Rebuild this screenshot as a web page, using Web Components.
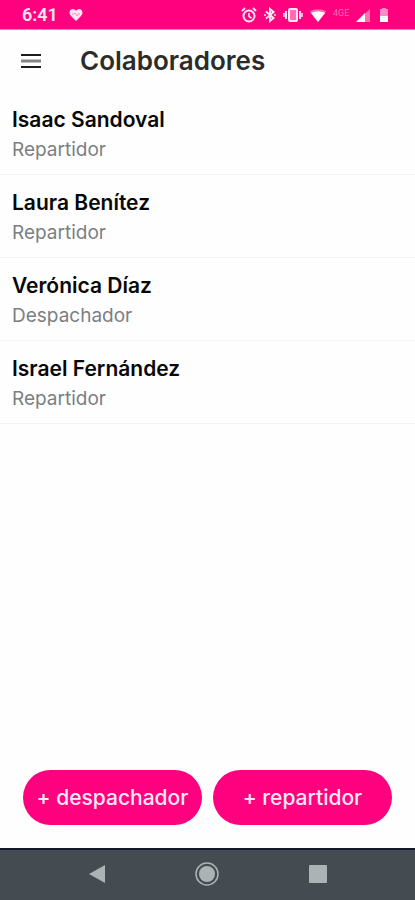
<!DOCTYPE html>
<html lang="es">
<head>
<meta charset="utf-8">
<meta name="viewport" content="width=device-width, initial-scale=1">
<title>Colaboradores</title>
<style>
  body {
    margin: 0;
    background: #fefefe;
    color: #080808;
    font-family: Inter, "Open Sans", sans-serif;
  }
</style>
</head>
<body>
<staff-app>
  <status-bar slot="status" time="6:41"></status-bar>
  <app-header slot="header">Colaboradores</app-header>
  <staff-member>Isaac Sandoval<span slot="role">Repartidor</span></staff-member>
  <staff-member>Laura Benítez<span slot="role">Repartidor</span></staff-member>
  <staff-member>Verónica Díaz<span slot="role">Despachador</span></staff-member>
  <staff-member>Israel Fernández<span slot="role">Repartidor</span></staff-member>
  <pill-button slot="actions">+ despachador</pill-button>
  <pill-button slot="actions">+ repartidor</pill-button>
  <system-nav slot="nav"></system-nav>
</staff-app>

<script>
/**
 * Defines a custom element that renders a template in its shadow root.
 *
 * @param {string} name - The tag name.
 * @param {string} html - The markup and styles of the element.
 * @param {Function} [setup] - Called with the element when it is connected.
 */
function define (name, html, setup) {
  const template = document.createElement('template')
  template.innerHTML = html

  customElements.define(
    name,
    class extends HTMLElement {
      constructor () {
        super()
        this.attachShadow({ mode: 'open' }).append(
          template.content.cloneNode(true)
        )
      }

      connectedCallback () {
        if (setup) {
          setup(this)
        }
      }
    }
  )
}

// Page frame.
define('staff-app', `
<style>
  :host {
    display: flex;
    flex-direction: column;
    min-height: 100vh;
  }

  main {
    flex: 1;
  }

  footer {
    display: grid;
    grid-template-columns: 1fr 1fr;
    gap: 11px;
    padding: 23px;
  }
</style>

<slot name="status"></slot>
<slot name="header"></slot>
<main role="list"><slot></slot></main>
<footer><slot name="actions"></slot></footer>
<slot name="nav"></slot>
`)

// Status bar with the clock and the device icons.
define('status-bar', `
<style>
  :host {
    display: flex;
    align-items: center;
    justify-content: space-between;
    height: 29px;
    padding: 0 23px 0 22px;
    background: #ff007f;
    border-bottom: 1px solid #ff7fbd;
    color: #ffe6f2;
    font-family: Roboto, sans-serif;
  }

  div {
    display: flex;
    align-items: center;
    gap: 11px;
  }

  .icons {
    gap: 5px;
  }

  time {
    font-size: 18px;
    font-weight: 600;
  }

  .net {
    width: 17px;
    font-size: 9px;
    line-height: 12px;
    color: #ff6db5;
    align-self: flex-start;
  }

  svg {
    display: block;
    fill: currentColor;
  }
</style>

<div>
  <time></time>
  <svg width="14" height="14" viewBox="0 0 14 14">
    <path d="M7 13 2 8C-1 4.500 1 1 4 1c1.500 0 2.500 1 3 2 .5-1 1.500-2 3-2 3 0 5 3.500 2 7z"/>
    <path d="M3 6h2l1-1 2 3 1-2h2" fill="none" stroke="#ff8cc5"/>
  </svg>
</div>
<div class="icons">
  <svg width="16" height="16" viewBox="0 0 16 16">
    <g fill="none" stroke="currentColor" stroke-width="2">
      <circle cx="8" cy="9" r="5.500"/>
      <path d="M1 4 4 1M15 4l-3-3"/>
      <path d="M8 6v3.500l2.500 1.500" stroke-width="1.500"/>
    </g>
  </svg>
  <svg width="16" height="16" viewBox="0 0 16 16">
    <path d="M4 4.500 11.500 11 8 14v-12L11.500 5 4 11.500" fill="none" stroke="currentColor" stroke-width="2"/>
    <circle cx="3" cy="8" r="1"/><circle cx="13" cy="8" r="1"/>
  </svg>
  <svg width="20" height="16" viewBox="0 0 20 16">
    <rect x="6" y="2" width="8" height="12" rx="1" fill="#ff6db5" stroke="currentColor" stroke-width="2"/>
    <path d="M3 4v8M17 4v8" stroke="currentColor" stroke-width="2"/>
    <path d="M1 6v4M19 6v4" stroke="currentColor" stroke-width="1.500"/>
  </svg>
  <svg width="20" height="16" viewBox="0 0 20 16">
    <path d="M10 15 2 4.500C6 1.500 14 1.500 18 4.500z" fill="#ff6db5"/>
    <path d="M10 15 3 6C7 4 13 4 17 6z" fill="#fff"/>
  </svg>
  <span class="net">4GE</span>
  <svg width="16" height="16" viewBox="0 0 16 16">
    <path d="M1 15 15 2v13z" fill="#ff6db5"/>
    <path d="M1 15 10 6v9z" fill="#fff"/>
  </svg>
  <svg width="16" height="16" viewBox="0 0 16 16">
    <path d="M6 1h4v1h2v7H4V2h2z" fill="#ff8cc5"/>
    <path d="M4 9h8v6H4z" fill="#fff"/>
  </svg>
</div>
`, (element) => {
  element.shadowRoot.querySelector('time').textContent = element.getAttribute('time')
})

// Title bar with the menu button.
define('app-header', `
<style>
  :host {
    display: flex;
    align-items: center;
    gap: 38px;
    height: 62px;
    padding: 0 20px;
  }

  button {
    padding: 0;
    border: 0;
    background: none;
    color: #1c1c1c;
  }

  svg {
    display: block;
  }

  h1 {
    margin: 0;
    color: #2b2b2b;
    font-size: 26px;
    font-weight: 600;
    line-height: 32px;
  }
</style>

<button type="button" aria-label="Menú">
  <svg width="22" height="16" viewBox="0 0 22 16">
    <path d="M1 2h20M1 14h20" stroke="currentColor" stroke-width="2"/>
    <path d="M1 8h20" stroke="#858585" stroke-width="3"/>
  </svg>
</button>
<h1><slot></slot></h1>
`)

// One row of the list: name and role.
define('staff-member', `
<style>
  :host {
    display: flex;
    flex-direction: column;
    gap: 4px;
    padding: 14px 12px 12px;
    border-bottom: 1px solid #f4f4f4;
  }

  .name {
    font-size: 21px;
    font-weight: 600;
    line-height: 28px;
  }

  .role {
    color: #7b7f83;
    font-size: 19px;
    line-height: 24px;
  }
</style>

<div class="name"><slot></slot></div>
<div class="role"><slot name="role"></slot></div>
`, (element) => {
  element.setAttribute('role', 'listitem')
})

// Rounded action button.
define('pill-button', `
<style>
  :host {
    display: block;
  }

  button {
    width: 100%;
    height: 55px;
    padding: 0;
    border: 0;
    border-radius: 28px;
    background: #ff007f;
    color: #ffeaf4;
    font: inherit;
    font-size: 21px;
    font-weight: 500;
    white-space: nowrap;
  }
</style>

<button type="button"><slot></slot></button>
`)

// System navigation: back, home, recent apps.
define('system-nav', `
<style>
  :host {
    display: grid;
    grid-template-columns: repeat(3, 1fr);
    align-items: center;
    height: 50px;
    padding: 0 10%;
    background: #454c51;
    border-top: 2px solid #16182b;
  }

  button {
    justify-self: center;
    padding: 0;
    border: 0;
    background: none;
    color: #abb3b4;
  }

  svg {
    display: block;
    fill: currentColor;
  }
</style>

<button type="button" aria-label="Atrás">
  <svg width="26" height="26" viewBox="0 0 26 26"><path d="M21 3v18L5 12z"/></svg>
</button>
<button type="button" aria-label="Inicio">
  <svg width="26" height="26" viewBox="0 0 26 26">
    <circle cx="13" cy="12" r="8"/>
    <circle cx="13" cy="12" r="11" fill="none" stroke="currentColor" stroke-width="1.500"/>
  </svg>
</button>
<button type="button" aria-label="Recientes">
  <svg width="26" height="26" viewBox="0 0 26 26"><rect x="4" y="3" width="18" height="18" rx="1"/></svg>
</button>
`)
</script>
</body>
</html>
